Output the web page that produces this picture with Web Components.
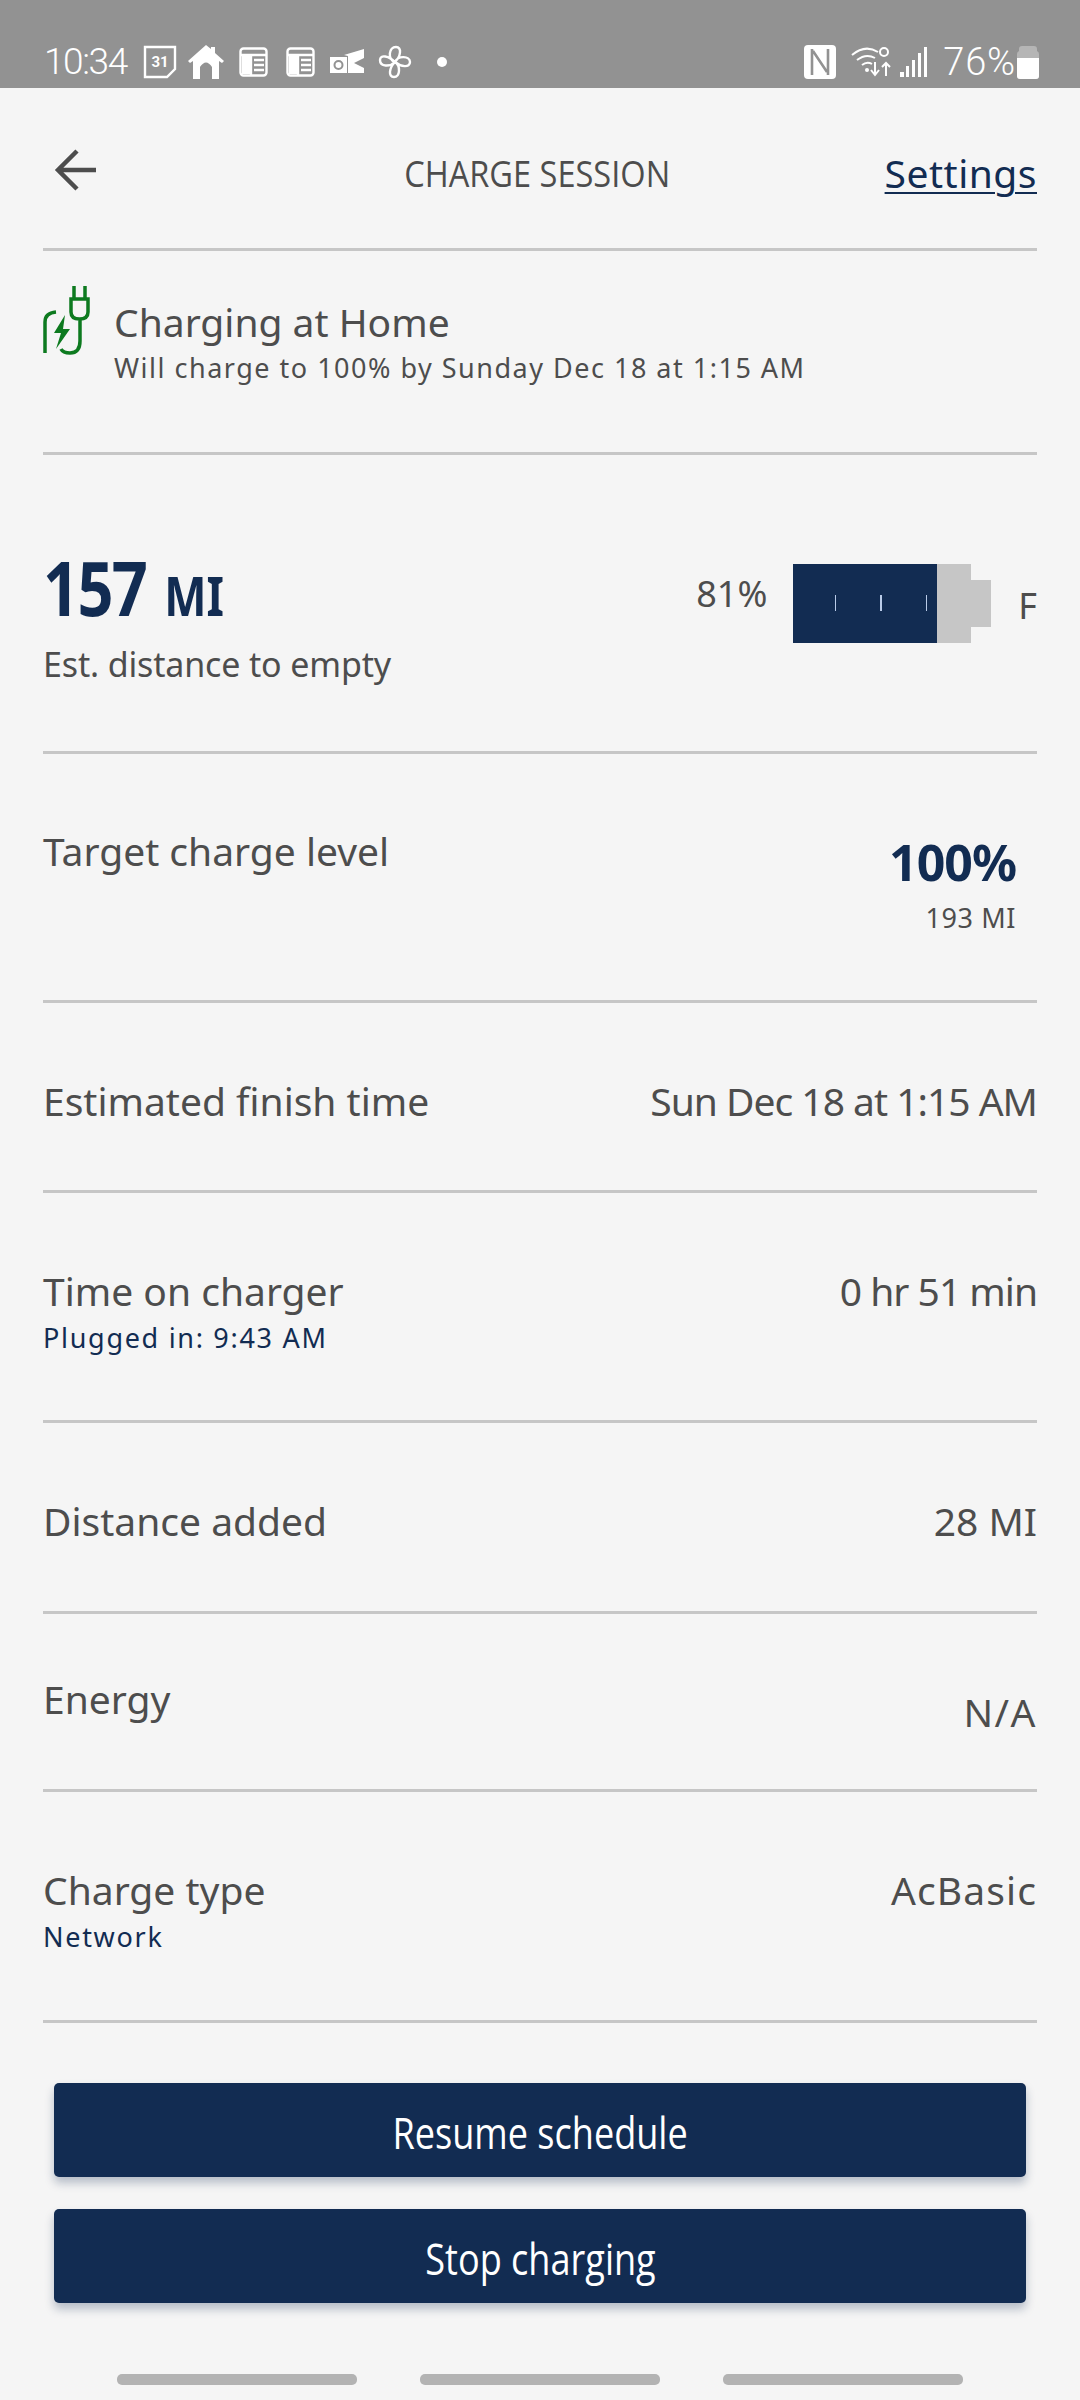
<!DOCTYPE html>
<html><head><meta charset="utf-8"><style>
html,body{margin:0;padding:0;background:#f5f5f5}
body{width:1080px;height:2400px;overflow:hidden;font-family:"Noto Sans","Open Sans",sans-serif;color:#4d4d4d}
charge-app{display:block}
.tight{letter-spacing:-1px}.wide{letter-spacing:1.1px}.wider{letter-spacing:1.5px}
</style></head><body>
<charge-app>
<status-bar></status-bar>
<app-header></app-header>
<info-row h="204"><charge-banner></charge-banner></info-row>
<info-row h="299"><range-block></range-block></info-row>
<info-row h="249" pt="73" rpt="82"><span slot="left">Target charge level</span><target-value slot="right"></target-value></info-row>
<info-row h="190" pt="74"><span slot="left">Estimated finish time</span><span class="tight" slot="right">Sun Dec 18 at 1:15 AM</span></info-row>
<info-row h="230" pt="74"><span slot="left">Time on charger</span><small-note slot="left">Plugged in: 9:43 AM</small-note><span class="tight" slot="right">0 hr 51 min</span></info-row>
<info-row h="191" pt="74"><span slot="left">Distance added</span><span slot="right">28 MI</span></info-row>
<info-row h="178" pt="61" rpt="74"><span slot="left">Energy</span><span class="wider" slot="right">N/A</span></info-row>
<info-row h="231" pt="74"><span slot="left">Charge type</span><small-note slot="left">Network</small-note><span class="wide" slot="right">AcBasic</span></info-row>
<action-area>
<action-button>Resume schedule</action-button>
<action-button>Stop charging</action-button>
</action-area>
<nav-bars></nav-bars>
</charge-app>
<script>
const def=(n,css,html,extra)=>customElements.define(n,class extends HTMLElement{
 constructor(){super();const r=this.attachShadow({mode:'open'});r.innerHTML='<style>'+css+'</style>'+html;}
 connectedCallback(){extra&&extra(this)}
});
def('status-bar',`:host{display:flex;align-items:center;box-sizing:border-box;height:88px;background:#929292;padding:44px 41px 8px 44px;color:#fff}
.t{font:300 37px/36px Roboto,sans-serif;letter-spacing:-1.4px;width:99px}
.n{font:300 38px/36px Roboto,sans-serif;letter-spacing:.8px;margin-left:15px}
svg{display:block;flex:none}.sp{flex:1}`,
`<span class="t">10:34</span>
<svg width="34" height="34" viewBox="0 0 34 34" fill="none" stroke="#fff" stroke-width="2.4"><path d="M2 2h30v22l-8 8H2z"/><text x="17" y="22" font-family="Roboto" font-weight="700" font-size="15" fill="#fff" stroke="none" text-anchor="middle">31</text></svg>
<svg style="margin-left:11px" width="36" height="34" viewBox="0 0 36 34" fill="#fff"><path d="M18 0l5 4V2h4v6l9 8-2 2-3-2v18h-7V22q-6-9-12 0v12H5V16l-3 2-2-2z"/></svg>
<svg style="margin-left:15px" width="29" height="30" viewBox="0 0 29 30" fill="none" stroke="#fff" stroke-width="2.4"><rect x="1.5" y="1.500" width="26" height="27" rx="3"/><path d="M2 8h25M12 8v20M15 13h10M15 18h10M15 23h10"/><rect x="3" y="9" width="8" height="18" fill="#fff" stroke="none"/></svg>
<svg style="margin-left:18px" width="29" height="30" viewBox="0 0 29 30" fill="none" stroke="#fff" stroke-width="2.4"><rect x="1.5" y="1.500" width="26" height="27" rx="3"/><path d="M2 8h25M12 8v20M15 13h10M15 18h10M15 23h10"/><rect x="3" y="9" width="8" height="18" fill="#fff" stroke="none"/></svg>
<svg style="margin-left:15px" width="35" height="26" viewBox="0 0 35 26"><path fill="#fff" d="M0 8h17v16H0z"/><circle cx="8.500" cy="16" r="4" fill="none" stroke="#929292" stroke-width="2"/><path fill="#fff" d="M14 6L34 0v9l-10 5 10 5v5H18V7z"/></svg>
<svg style="margin-left:13px" width="34" height="34" viewBox="0 0 34 34" fill="none" stroke="#fff" stroke-width="2.4"><path d="M17 17C9 14 11 2 18 2c6 0 5 9-1 15zM17 17c3-7 15-6 15 0 0 6-9 5-15 0zM17 17c6 4 5 15-1 15-6 0-5-9 1-15zM17 17c-5 5-15 5-15-2 0-6 9-4 15 2z"/></svg>
<svg style="margin-left:24px" width="12" height="12"><circle cx="6" cy="6" r="5" fill="#fff"/></svg>
<span class="sp"></span>
<svg width="32" height="34" viewBox="0 0 32 34"><rect width="32" height="34" rx="4" fill="#fff"/><path d="M8 4v26M24 4v26M9 6l14 21" stroke="#929292" stroke-width="2.600" fill="none"/></svg>
<svg style="margin-left:15px" width="40" height="32" viewBox="0 0 40 32" fill="none" stroke="#fff" stroke-width="2"><path d="M1 9q13-11 26-3M6 14q9-7 18-2M11 19q5-4 10-1"/><circle cx="16" cy="24" r="2" fill="#fff" stroke="none"/><circle cx="33" cy="6" r="4"/><path d="M24 16v12M20 24l4 5 4-5M35 30V17M31 21l4-4 4 4"/></svg>
<svg style="margin-left:9px" width="28" height="32" viewBox="0 0 28 32" fill="#fff"><rect x="0" y="26" width="4" height="5"/><rect x="6" y="20" width="3" height="11"/><rect x="12" y="14" width="3" height="17"/><rect x="18" y="7" width="3" height="24"/><rect x="24" y="1" width="3" height="30"/></svg>
<span class="n">76%</span>
<svg style="margin-left:1px" width="22" height="33" viewBox="0 0 22 33"><path d="M5 0h12q3 0 3 3v2q2 1 2 3v22q0 3-3 3H3q-3 0-3-3V8q0-2 2-3V3q0-3 3-3z" fill="#b5b5b5"/><path d="M0 12h22v18q0 3-3 3H3q-3 0-3-3z" fill="#fff"/></svg>`);
def('app-header',`:host{display:grid;grid-template-columns:1fr auto 1fr;align-items:start;height:160px;margin:0 43px;border-bottom:3px solid #c6c6c6}
svg{margin:60px 0 0 11px;display:block}
.t{text-align:center;font:400 37px/44px "Open Sans",sans-serif;margin:63px 6px 0 0;color:#4d4d4d}
.t span{display:inline-block;transform:scaleX(.88);white-space:nowrap}
.s{justify-self:end;font:400 39px/44px "Noto Sans",sans-serif;letter-spacing:.5px;color:#122c52;text-decoration:underline;text-decoration-thickness:2px;text-underline-offset:4px;margin-top:63px}`,
`<svg width="44" height="44" viewBox="0 0 44 44" fill="none" stroke="#4d4d4d" stroke-width="4.500"><path d="M42 22H4M23 3L4 22l19 19"/></svg><span class="t"><span>CHARGE SESSION</span></span><span class="s">Settings</span>`);
def('info-row',`:host{display:flex;justify-content:space-between;align-items:flex-start;box-sizing:border-box;margin:0 43px;border-bottom:3px solid #c6c6c6;font-size:39px;line-height:48px;color:#4d4d4d}
.l{display:flex;flex-direction:column}.r{text-align:right}`,
`<div class="l"><slot name="left"></slot></div><slot></slot><div class="r"><slot name="right"></slot></div>`,
el=>{const h=el.getAttribute('h');el.style.height=h+'px';
 const s=el.shadowRoot;const pt=el.getAttribute('pt');
 if(pt){s.querySelector('.l').style.paddingTop=pt+'px';s.querySelector('.r').style.paddingTop=(el.getAttribute('rpt')||pt)+'px'}
 else{s.querySelector('.l').style.display='none';s.querySelector('.r').style.display='none'}});
def('small-note',`:host{display:block;font-size:27px;line-height:34px;letter-spacing:1.7px;color:#122c52;margin-top:6px}`,`<slot></slot>`);
def('charge-banner',`:host{display:flex;width:100%;padding-top:35px;box-sizing:border-box}
svg{display:block;flex:none}.c{margin:11px 0 0 21px}
.a{font-size:39px;line-height:50px}.b{font-size:27px;line-height:34px;letter-spacing:1.5px;margin-top:4px}`,
`<svg width="50" height="70" viewBox="0 0 50 70" fill="none" stroke="#0d7a1f" stroke-width="3.500"><path d="M31 0v14M42 0v14M28 13h17v13q0 7-8.500 7T28 26zM37 33v22q0 12-10 12-7 0-9-4"/><path d="M2 67V36q0-9 11-10"/><path fill="#0d7a1f" stroke="none" d="M22 29l-11 18h7l-5 16 14-20h-7z"/></svg>
<div class="c"><div class="a">Charging at Home</div><div class="b">Will charge to 100% by Sunday Dec 18 at 1:15 AM</div></div>`);
def('range-block',`:host{display:flex;width:100%;justify-content:space-between;padding-top:87px;box-sizing:border-box}
.big{font:700 76px/90px "Noto Sans",sans-serif;color:#122c52;letter-spacing:-2px;transform:scaleX(.83);transform-origin:left center;white-space:nowrap}.big span{font-size:54px;letter-spacing:0;margin-left:4px}
.e{font-size:34px;line-height:44px;margin-top:2px;letter-spacing:-.15px}
.bat{display:flex;align-items:flex-start;padding-top:22px}
.p{font-size:36px;line-height:44px;margin:8px 26px 0 0}
.body{width:178px;height:79px;background:#c6c6c6;display:flex}
.fill{width:144px;height:79px;background:#122c52;display:flex;justify-content:flex-end;gap:44px;padding:31px 10px 0 0;box-sizing:border-box}
.fill i{width:1.500px;height:16px;background:#b9cbe8}
.nub{width:20px;height:47px;background:#c6c6c6;margin-top:16px}
.f{font-size:36px;line-height:44px;margin:20px 0 0 27px}`,
`<div><div class="big">157 <span>MI</span></div><div class="e">Est. distance to empty</div></div>
<div class="bat"><span class="p">81%</span><div class="body"><div class="fill"><i></i><i></i><i></i></div></div><div class="nub"></div><span class="f">F</span></div>`);
def('target-value',`:host{display:block;text-align:right;padding-right:21px}
.a{font:700 50px/60px "Noto Sans",sans-serif;color:#122c52;letter-spacing:-1px;margin-top:-4px}.b{font-size:27px;line-height:36px;margin-top:8px;letter-spacing:.6px}`,
`<div class="a">100%</div><div class="b">193 MI</div>`);
def('action-area',`:host{display:flex;flex-direction:column;gap:32px;padding:60px 54px 0}`,`<slot></slot>`);
def('action-button',`:host{display:flex;align-items:center;justify-content:center;height:94px;background:#122c52;border-radius:5px;box-shadow:0 6px 10px rgba(18,44,82,.28);color:#fff;font:400 44px/50px "Open Sans",sans-serif}
span{display:inline-block;transform:scaleX(.82);white-space:nowrap;padding-top:3px}`,`<span><slot></slot></span>`);
def('nav-bars',`:host{display:flex;justify-content:center;gap:63px;margin-top:71px}
i{width:240px;height:11px;border-radius:5px;background:#b3b3b3}`,`<i></i><i></i><i></i>`);
</script>
</body></html>
